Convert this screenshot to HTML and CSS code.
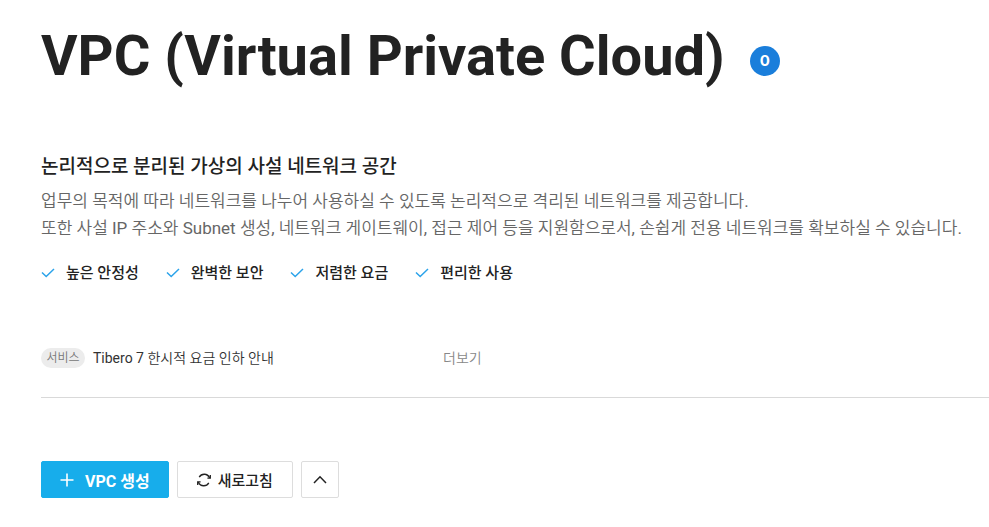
FILE: index.html
```html
<!DOCTYPE html>
<html lang="ko">
<head>
<meta charset="utf-8">
<title>VPC (Virtual Private Cloud)</title>
<link rel="stylesheet" href="styles.css">
</head>
<body>
<main class="page">
  <header class="page-header">
    <h1 class="page-title">VPC (Virtual Private Cloud)</h1>
    <span class="count">0</span>
  </header>

  <section class="intro">
    <h2 class="intro-title">논리적으로 분리된 가상의 사설 네트워크 공간</h2>
    <p class="intro-text">업무의 목적에 따라 네트워크를 나누어 사용하실 수 있도록 논리적으로 격리된 네트워크를 제공합니다.<br>또한 사설 IP 주소와 Subnet 생성, 네트워크 게이트웨이, 접근 제어 등을 지원함으로서, 손쉽게 전용 네트워크를 확보하실 수 있습니다.</p>
    <ul class="features">
      <li><svg class="check" viewBox="0 0 14 10"><path d="M1 4.5 5.2 8.5 13 1"/></svg>높은 안정성</li>
      <li><svg class="check" viewBox="0 0 14 10"><path d="M1 4.5 5.2 8.5 13 1"/></svg>완벽한 보안</li>
      <li><svg class="check" viewBox="0 0 14 10"><path d="M1 4.5 5.2 8.5 13 1"/></svg>저렴한 요금</li>
      <li><svg class="check" viewBox="0 0 14 10"><path d="M1 4.5 5.2 8.5 13 1"/></svg>편리한 사용</li>
    </ul>
  </section>

  <section class="notice">
    <span class="tag">서비스</span>
    <a class="notice-link" href="#notice">Tibero 7 한시적 요금 인하 안내</a>
    <a class="more" href="#more">더보기</a>
  </section>

  <div class="toolbar">
    <button class="btn btn-primary" type="button"><svg class="plus" viewBox="0 0 14 14"><path d="M7 0.5V13.5M0.5 7H13.5"/></svg>VPC 생성</button>
    <button class="btn btn-refresh" type="button"><svg class="refresh" viewBox="0 0 14 14"><path d="M2.2 4.2C4.6.1 10.4.2 12.7 4.9M11.8 9.8C9.4 13.9 3.6 13.8 1.3 9.1"/><path d="M13.3 2V5.1H10.4M.7 12V8.9H3.6"/></svg>새로고침</button>
    <button class="btn btn-fold" type="button" aria-label="접기"><svg class="chevron" viewBox="0 0 14 9"><path d="M1 8 7 1.8 13 8"/></svg></button>
  </div>
</main>
</body>
</html>
```

FILE: styles.css
```css
* {
  box-sizing: border-box;
}

body {
  margin: 0;
  background: #fff;
  color: #222;
  font-family: Roboto, "Noto Sans CJK KR", sans-serif;
  font-size: 14px;
}

h1, h2, p, ul {
  margin: 0;
  padding: 0;
}

svg {
  fill: none;
  stroke: currentColor;
  flex: none;
}

a {
  text-decoration: none;
}

.page {
  padding: 24px 0 24px 41px;
}

.page-header {
  display: flex;
  align-items: center;
  gap: 25px;
}

.page-title {
  font-size: 56px;
  line-height: 64px;
  font-weight: 700;
}

.count {
  width: 30px;
  height: 30px;
  margin-top: 10px;
  border-radius: 50%;
  background: #1a7edb;
  color: #fff;
  font: 700 15px/30px Inter, sans-serif;
  text-align: center;
}

.intro {
  margin-top: 65px;
}

.intro-title {
  font-size: 19px;
  line-height: 28px;
  font-weight: 500;
}

.intro-text {
  margin-top: 7px;
  color: #666;
  font-family: Roboto, "Noto Sans CJK KR DemiLight", "Noto Sans CJK KR", sans-serif;
  font-size: 17px;
  line-height: 27px;
}

.features {
  display: flex;
  gap: 27px;
  margin-top: 20px;
  list-style: none;
  font-size: 15px;
  line-height: 22px;
  font-weight: 500;
}

.features li {
  display: flex;
  align-items: center;
  gap: 11px;
}

.check {
  width: 14px;
  height: 10px;
  color: #2ba3ea;
  stroke-width: 1.5;
}

.notice {
  display: flex;
  align-items: center;
  margin-top: 64px;
  padding-bottom: 29px;
  border-bottom: 1px solid #d9d9d9;
  font-family: Roboto, "Noto Sans CJK KR DemiLight", "Noto Sans CJK KR", sans-serif;
  line-height: 20px;
}

.tag {
  width: 44px;
  border-radius: 10px;
  background: #ececec;
  color: #777;
  font-size: 12px;
  text-align: center;
}

.notice-link {
  width: 358px;
  padding-left: 8px;
  color: #333;
}

.more {
  color: #888;
}

.toolbar {
  display: flex;
  gap: 8px;
  margin-top: 63px;
}

.btn {
  display: flex;
  align-items: center;
  justify-content: center;
  height: 37px;
  padding: 0 18px;
  border: 1px solid #ddd;
  border-radius: 2px;
  background: #fff;
  color: #222;
  font-family: inherit;
  font-size: 15px;
  font-weight: 500;
}

.btn-primary {
  gap: 11px;
  border-color: #17adeb;
  background: #17adeb;
  color: #fff;
  font-size: 16px;
  font-weight: 700;
}

.btn-refresh {
  gap: 7px;
  padding: 0 19px;
}

.btn-fold {
  width: 38px;
  padding: 0;
}

.plus {
  width: 14px;
  height: 14px;
  stroke-width: 1.6;
}

.refresh {
  width: 14px;
  height: 14px;
  stroke-width: 1.3;
}

.chevron {
  width: 14px;
  height: 9px;
  stroke-width: 1.5;
}
```
